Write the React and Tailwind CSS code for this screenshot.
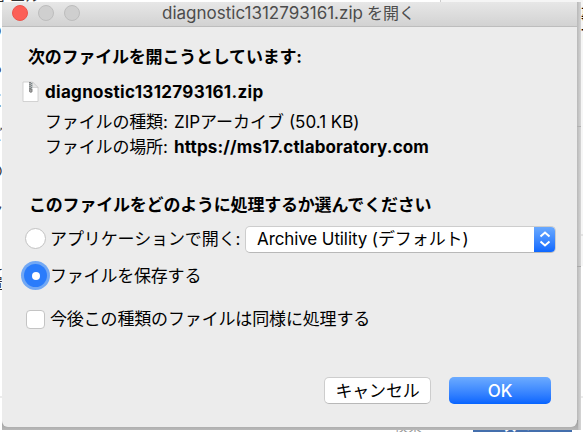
import React from "react";

function ZipIcon() {
  return (
    <svg width="17" height="22" viewBox="0 0 17 22" className="block">
      <path d="M1 1h9.5l5.5 5.5V20.5H1z" fill="#fff" stroke="#c9c9c9" strokeWidth="0.8" />
      <path d="M10.5 1v5.5H16z" fill="#e6e6e6" stroke="#c4c4c4" strokeWidth="0.6" />
      <path d="M8 1.200v7" stroke="#4d5254" strokeWidth="1.8" strokeDasharray="1.4 0.6" />
      <path d="M9.600 1.800v7" stroke="#7b8588" strokeWidth="1.4" strokeDasharray="1.4 0.6" />
      <rect x="7.6" y="8" width="2.400" height="3.200" rx="0.8" fill="#aaa" stroke="#666" strokeWidth="0.8" />
    </svg>
  );
}

function Backdrop() {
  return (
    <div className="absolute inset-0 overflow-hidden bg-white text-[15px] leading-none text-[#333]">
      <div className="absolute left-[440px] top-0 h-[2px] w-[143px] bg-[#f5f5f5]" />
      <div className="absolute left-[440px] top-0 h-[2px] w-px bg-[#ccc]" />
      <span className="absolute -left-[9px] -top-[12px] whitespace-nowrap">者 エル</span>
      <span className="absolute -left-[13px] top-[23px]">の</span>
      <span className="absolute -left-[12px] top-[60px]">る</span>
      <span className="absolute -left-[10px] top-[93px]">く</span>
      <span className="absolute -left-[12px] top-[127px]">ど</span>
      <span className="absolute -left-[12px] top-[163px]">の</span>
      <span className="absolute -left-[13px] top-[197px]">ん</span>
      <span className="absolute -left-[12px] top-[256px]">え</span>
      <span className="absolute -left-[12px] top-[276px]">置</span>
      <div className="absolute left-0 top-[396px] h-[2px] w-[2px] bg-[#ececec]" />
      <div className="absolute left-[577px] top-[2px] h-[428px] w-[4px] bg-linear-to-r from-[#b8b8b8] to-[#d6d6d6]" />
      <div className="absolute left-[577px] top-[126px] h-px w-[4px] bg-[#b0b0b0]" />
      <div className="absolute left-[577px] top-[266px] h-px w-[4px] bg-[#a8a8a8]" />
      <div className="absolute left-[581px] top-[2px] h-[264px] w-[2px] bg-[#f6f6f6]" />
      <div className="absolute left-[581px] top-[234px] h-[2px] w-[2px] bg-[#e2e2e2]" />
      <div className="absolute left-[581px] top-[396px] h-[2px] w-[2px] bg-[#ececec]" />
      <span className="absolute left-[581px] top-[7px] text-[14px] font-bold text-black">裏</span>
      <span className="absolute left-[581px] top-[26px] text-[14px] font-bold text-black">言</span>
      <div className="absolute left-[2px] top-[420px] h-[10px] w-[576px] bg-linear-to-b from-[#999] to-[#b8b8b8]" />
      <div className="absolute left-[360px] top-[430px] h-[2px] w-[98px] overflow-hidden bg-white text-[#999]">
        <span className="absolute left-[34px] -top-[11px] whitespace-nowrap text-[14px]">検索</span>
      </div>
      <div className="absolute left-[473px] top-[430px] h-[2px] w-[99px] overflow-hidden bg-[#446fad] text-white">
        <span className="absolute left-[29px] -top-[12px] whitespace-nowrap text-[14px] font-bold">次へ</span>
      </div>
    </div>
  );
}

export default function App() {
  return (
    <div className="relative h-[432px] w-[583px] overflow-hidden bg-white font-['Inter','Noto_Sans_CJK_JP',sans-serif] text-[17px] leading-[24px] text-black">
      <Backdrop />
      <div className="relative ml-[2px] mt-[2px] flex h-[425px] w-[575px] flex-col overflow-hidden rounded-b-[6px] bg-[#ececec] whitespace-nowrap">
        <header className="flex h-[25px] shrink-0 items-center border-b border-[#bdbdbd] bg-linear-to-b from-[#e7e7e7] to-[#d2d2d2]">
          <div className="-mt-[3px] ml-[10px] flex gap-[10px]">
            <i className="size-[16px] rounded-full border border-[#ec544c] bg-[#fc5f57]" />
            <i className="size-[16px] rounded-full border border-[#bdbdbd] bg-[#cfcfcf]" />
            <i className="size-[16px] rounded-full border border-[#bdbdbd] bg-[#cfcfcf]" />
          </div>
          <h1 className="-mt-[3px] ml-[82px] flex gap-[4px] text-[#4c4c4c]">
            <span className="text-[17px]">diagnostic1312793161.zip</span>
            <span className="text-[16px]">を開く</span>
          </h1>
        </header>

        <h2 className="ml-[26px] mt-[18px] h-[24px] font-bold tracking-[-0.2px]">次のファイルを開こうとしています:</h2>
        <div className="ml-[20px] mt-[11px] flex h-[24px] items-center gap-[6px]">
          <ZipIcon />
          <span className="font-bold tracking-[0.3px]">diagnostic1312793161.zip</span>
        </div>
        <div className="ml-[43px] mt-[6px] flex h-[24px]">
          <span className="w-[129px] tracking-[-0.15px]">ファイルの種類:</span>
          <span>ZIPアーカイブ (50.1 KB)</span>
        </div>
        <div className="ml-[43px] mt-[1px] flex h-[24px]">
          <span className="w-[129px] tracking-[-0.15px]">ファイルの場所:</span>
          <span className="font-bold tracking-[0.15px]">https://ms17.ctlaboratory.com</span>
        </div>

        <h2 className="ml-[27px] mt-[34px] h-[24px] font-bold tracking-[-0.2px]">このファイルをどのように処理するか選んでください</h2>
        <div className="ml-[23px] mt-[8px] flex h-[27px] items-center">
          <i className="size-[21px] rounded-full border border-[#c2c2c2] bg-white" />
          <span className="ml-[4px] w-[195px] tracking-[-0.1px]">アプリケーションで開く:</span>
          <div className="mt-px flex h-[27px] w-[311px] overflow-hidden rounded-[5px] border border-[#cdcdcd] border-b-[#b8b8b8] bg-white">
            <span className="ml-[11px] grow tracking-[-0.1px]">Archive Utility (デフォルト)</span>
            <div className="-my-px -mr-px flex h-[27px] w-[22px] items-center justify-center bg-linear-to-b from-[#6cabff] to-[#0564ff]">
              <svg width="12" height="18" viewBox="0 0 12 18" fill="none" stroke="#fff" strokeWidth="2">
                <path d="M1.500 6.500 6 2.500l4.500 4M1.500 11.500 6 15.500l4.500-4" />
              </svg>
            </div>
          </div>
        </div>
        <div className="ml-[19px] mt-[9px] flex h-[29px] items-center">
          <div className="flex size-[29px] items-center justify-center rounded-full bg-[#72a8f4]">
            <i className="flex size-[23px] items-center justify-center rounded-full bg-[#2a7cfb]">
              <i className="size-[8px] rounded-full bg-white" />
            </i>
          </div>
          <span className="tracking-[-0.2px]">ファイルを保存する</span>
        </div>
        <div className="ml-[24px] mt-[17px] flex h-[24px] items-center">
          <i className="size-[19px] rounded-[4px] border border-[#c4c4c4] bg-white" />
          <span className="ml-[5px] tracking-[-0.15px]">今後この種類のファイルは同様に処理する</span>
        </div>

        <div className="ml-[322px] mt-[46px] flex gap-[18px]">
          <button className="h-[27px] w-[107px] rounded-[5px] border border-[#cdcdcd] border-b-[#b8b8b8] bg-white tracking-[-0.2px]">キャンセル</button>
          <button className="h-[27px] w-[102px] rounded-[5px] bg-linear-to-b from-[#6cabff] to-[#0564ff] font-medium text-white">OK</button>
        </div>
      </div>
    </div>
  );
}
